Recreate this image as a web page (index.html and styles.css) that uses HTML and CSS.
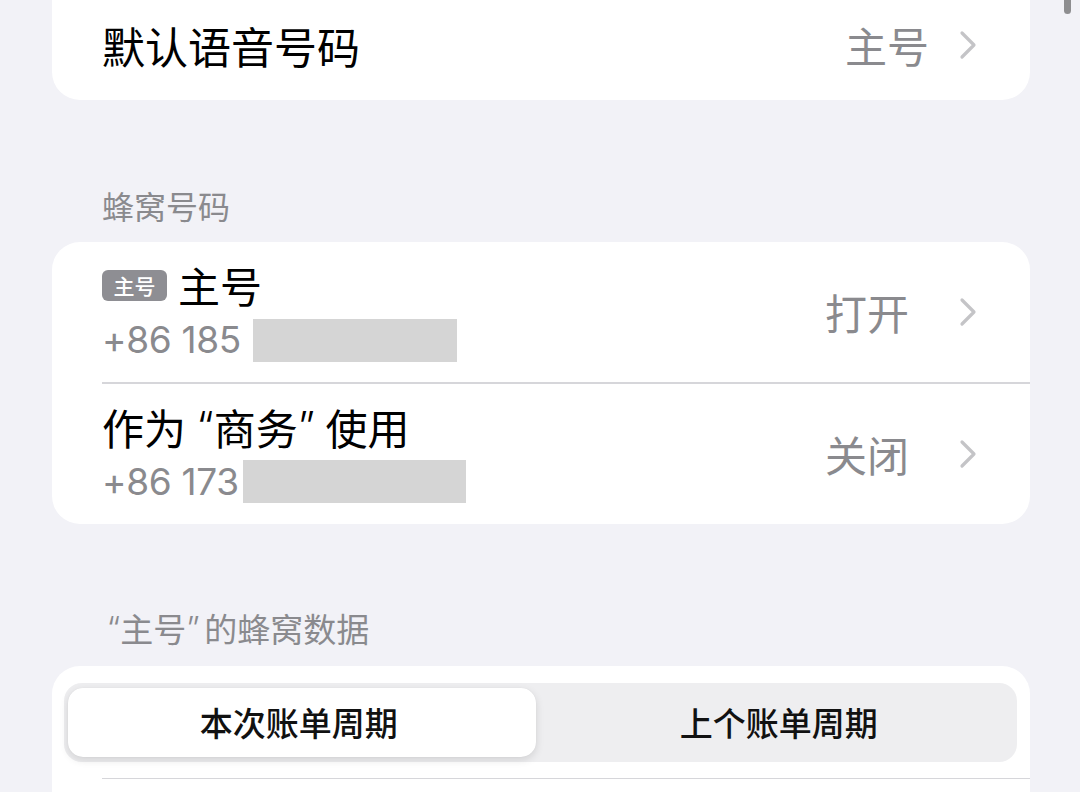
FILE: index.html
```html
<!DOCTYPE html>
<html lang="zh-CN">
<head>
<meta charset="utf-8">
<link rel="stylesheet" href="styles.css">
</head>
<body>
<div class="scrollbar"></div>
<main class="page">
  <section class="card card-top">
    <div class="row row-single">
      <span class="title title-lg">默认语音号码</span>
      <span class="value">主号</span>
      <svg class="chev chev-near" viewBox="0 0 18 30" width="18" height="30"><path d="M3 3 L15 15 L3 27" fill="none" stroke="#c4c4c7" stroke-width="3.2" stroke-linecap="round" stroke-linejoin="round"/></svg>
    </div>
  </section>

  <h2 class="section-head">蜂窝号码</h2>
  <section class="card">
    <div class="row row-double">
      <div class="col">
        <div class="title"><span class="badge">主号</span>主号</div>
        <div class="sub">+86 185 <span class="mask mask-a"></span></div>
      </div>
      <span class="value">打开</span>
      <svg class="chev" viewBox="0 0 18 30" width="18" height="30"><path d="M3 3 L15 15 L3 27" fill="none" stroke="#c4c4c7" stroke-width="3.2" stroke-linecap="round" stroke-linejoin="round"/></svg>
    </div>
    <div class="sep"></div>
    <div class="row row-double">
      <div class="col">
        <div class="title">作为<span class="q ql">“</span>商务<span class="q qr">”</span>使用</div>
        <div class="sub">+86 173<span class="mask mask-b"></span></div>
      </div>
      <span class="value">关闭</span>
      <svg class="chev" viewBox="0 0 18 30" width="18" height="30"><path d="M3 3 L15 15 L3 27" fill="none" stroke="#c4c4c7" stroke-width="3.2" stroke-linecap="round" stroke-linejoin="round"/></svg>
    </div>
  </section>

  <h2 class="section-head section-head-2"><span class="q ql">“</span>主号<span class="q qr">”</span>的蜂窝数据</h2>
  <section class="card card-bottom">
    <div class="segmented">
      <div class="seg seg-active">本次账单周期</div>
      <div class="seg">上个账单周期</div>
    </div>
    <div class="sep sep-bottom"></div>
  </section>
</main>
</body>
</html>
```

FILE: styles.css
```css
* { box-sizing: border-box; }
html, body {
  margin: 0;
  padding: 0;
  background: #f2f2f7;
  overflow: hidden;
  height: 792px;
}
body {
  font-family: "Noto Sans CJK SC", "Inter", sans-serif;
  color: #000;
  position: relative;
}
.scrollbar {
  position: absolute;
  left: 1064px;
  top: -10px;
  width: 7px;
  height: 24px;
  border-radius: 4px;
  background: #8e8e90;
}
.page {
  padding: 0 50px 0 52px;
}
.card {
  background: #fff;
  border-radius: 28px;
  overflow: hidden;
}
.card-top {
  margin-top: -40px;
  padding-top: 30px;
}
.row {
  display: flex;
  align-items: center;
  padding: 0 53px 0 50px;
}
.row-single { height: 110px; }
.row-double { height: 140px; }
.title {
  font-size: 42px;
  line-height: 52px;
  display: flex;
  align-items: center;
  white-space: nowrap;
}
.title-lg { font-size: 43px; }
.row-single .title { flex: 1; }
.q {
  font-family: "Inter", sans-serif;
  font-weight: 300;
  display: inline-block;
  width: 0.66em;
  text-align: center;
}
.ql { text-align: right; }
.qr { text-align: left; }
.col { flex: 1; display: flex; flex-direction: column; }
.sub {
  font-family: "Inter", "Noto Sans CJK SC", sans-serif;
  font-size: 37px;
  line-height: 50px;
  margin-top: 4px;
  color: #8a8a8e;
  display: flex;
  align-items: center;
  white-space: pre;
  letter-spacing: -0.3px;
}
.mask {
  display: inline-block;
  height: 43px;
  background: #d5d5d5;
}
.mask-a { width: 204px; margin-left: 2px; }
.mask-b { width: 223px; margin-left: 4px; }
.badge {
  display: inline-flex;
  align-items: center;
  justify-content: center;
  width: 65px;
  height: 31px;
  border-radius: 6px;
  background: #8e8e93;
  color: #fff;
  font-size: 21px;
  line-height: 1;
  margin-right: 11px;
  font-weight: 500;
}
.value {
  font-size: 42px;
  color: #8a8a8e;
  line-height: 52px;
}
.chev {
  margin-left: 50px;
  flex: none;
}
.chev-near { margin-left: 30px; }
.sep {
  height: 1.5px;
  background: #d6d6da;
  margin-left: 50px;
}
.section-head {
  margin: 85px 0 17px 50px;
  font-size: 32px;
  line-height: 40px;
  font-weight: 400;
  color: #8a8a8e;
  display: flex;
  align-items: center;
}
.section-head-2 {
  font-size: 33px;
  margin-top: 84px;
  margin-bottom: 18px;
}
.section-head-2 .q { width: 0.55em; }
.card-bottom {
  padding: 17px 13px 0 12px;
  height: 200px;
  border-radius: 28px 28px 0 0;
}
.segmented {
  display: grid;
  grid-template-columns: 1fr 1fr;
  height: 79px;
  background: #eeeef0;
  border-radius: 18px;
  padding: 5px 4px;
}
.seg {
  display: flex;
  align-items: center;
  justify-content: center;
  font-size: 33px;
  font-weight: 500;
  border-radius: 15px;
  padding-left: 4px;
  color: #111;
}
.seg-active {
  background: #fff;
  box-shadow: 0 3px 8px rgba(0,0,0,0.12), 0 0 1px rgba(0,0,0,0.08);
  margin-right: 5px;
  padding-left: 0;
  padding-right: 6px;
}
.sep-bottom {
  margin-top: 16px;
  margin-left: 38px;
  margin-right: -13px;
}
```
